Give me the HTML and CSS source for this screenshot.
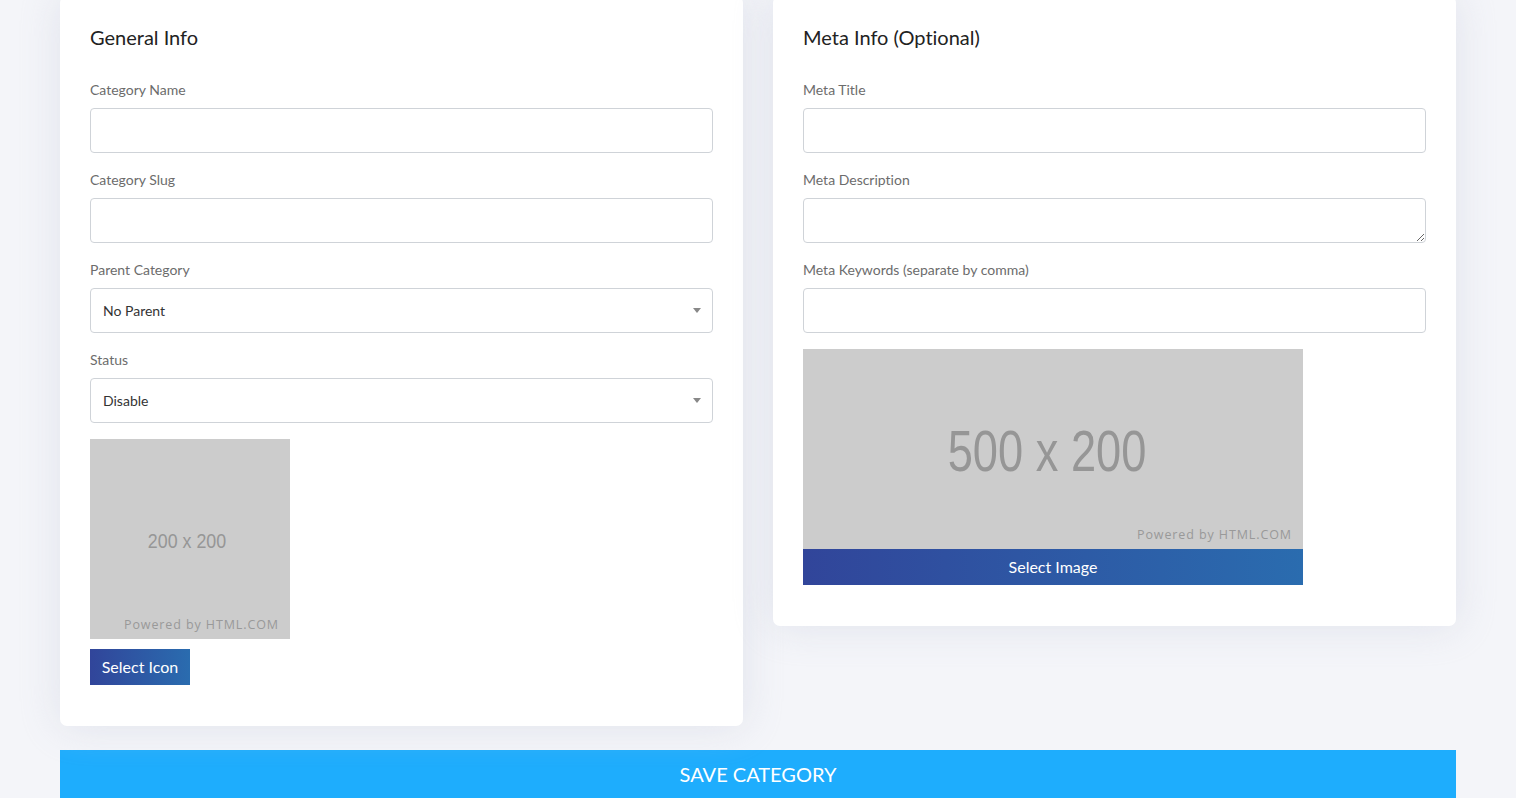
FILE: index.html
```html
<!DOCTYPE html>
<html lang="en">
<head>
<meta charset="utf-8">
<title>Add Category</title>
<link rel="stylesheet" href="styles.css">
</head>
<body>
<div class="page">
  <div class="row">
    <div class="card">
      <h2 class="card-title">General Info</h2>
      <div class="group">
        <label class="label">Category Name</label>
        <input class="control" type="text">
      </div>
      <div class="group">
        <label class="label">Category Slug</label>
        <input class="control" type="text">
      </div>
      <div class="group">
        <label class="label">Parent Category</label>
        <div class="select-wrap">
          <select class="control select"><option>No Parent</option></select>
          <span class="caret"></span>
        </div>
      </div>
      <div class="group">
        <label class="label">Status</label>
        <div class="select-wrap">
          <select class="control select"><option>Disable</option></select>
          <span class="caret"></span>
        </div>
      </div>
      <div class="upload upload-icon">
        <svg class="ph" width="200" height="200" viewBox="0 0 200 200">
          <rect width="200" height="200" fill="#cccccc"/>
          <text transform="translate(97 109) scale(0.85 1)" text-anchor="middle" font-family="Liberation Sans, Arial, sans-serif" font-size="21" fill="#969696">200 x 200</text>
          <text x="189" y="190" text-anchor="end" font-family="Open Sans, sans-serif" font-size="12.5" letter-spacing="0.9" fill="#999999">Powered by HTML.COM</text>
        </svg>
        <button class="btn-grad btn-icon" type="button">Select Icon</button>
      </div>
    </div>
    <div class="card">
      <h2 class="card-title">Meta Info (Optional)</h2>
      <div class="group">
        <label class="label">Meta Title</label>
        <input class="control" type="text">
      </div>
      <div class="group">
        <label class="label">Meta Description</label>
        <textarea class="control textarea"></textarea>
      </div>
      <div class="group">
        <label class="label">Meta Keywords (separate by comma)</label>
        <input class="control" type="text">
      </div>
      <div class="upload upload-image">
        <svg class="ph" width="500" height="200" viewBox="0 0 500 200">
          <rect width="500" height="200" fill="#cccccc"/>
          <text transform="translate(244 122) scale(0.78 1)" text-anchor="middle" font-family="Liberation Sans, Arial, sans-serif" font-size="58" fill="#969696">500 x 200</text>
          <text x="489" y="190" text-anchor="end" font-family="Open Sans, sans-serif" font-size="12.5" letter-spacing="0.9" fill="#999999">Powered by HTML.COM</text>
        </svg>
        <button class="btn-grad btn-image" type="button">Select Image</button>
      </div>
    </div>
  </div>
  <button class="btn-save" type="button">SAVE CATEGORY</button>
</div>
</body>
</html>
```

FILE: styles.css
```css
* { box-sizing: border-box; }
html, body { margin: 0; padding: 0; }
body {
  background: #f4f5f9;
  font-family: "Lato", "Open Sans", sans-serif;
  font-variant-ligatures: no-common-ligatures;
  color: #212529;
  overflow: hidden;
}
.page {
  padding: 0 60px;
  margin-top: -4px;
}
.row {
  display: flex;
  align-items: flex-start;
  gap: 30px;
  margin-bottom: 24px;
}
.card {
  flex: 1 1 0;
  background: #fff;
  border-radius: 7px;
  padding: 29px 30px 30px;
  box-shadow: 0 0 40px rgba(200, 205, 220, 0.45);
}
.card-title {
  margin: 0 0 30px;
  font-size: 20px;
  line-height: 24px;
  font-weight: 400;
  color: #222;
}
.group { margin-bottom: 16px; }
.label {
  display: block;
  font-size: 14px;
  line-height: 21px;
  color: #6c6c6c;
  margin-bottom: 8px;
}
.control {
  display: block;
  width: 100%;
  height: 45px;
  border: 1px solid #cfd3d8;
  border-radius: 4px;
  background: #fff;
  font-family: "Lato", sans-serif;
  font-variant-ligatures: no-common-ligatures;
  font-size: 14px;
  color: #333;
  padding: 0 12px;
  outline: none;
  margin: 0;
}
.textarea {
  resize: vertical;
  padding: 8px 12px;
  min-height: 45px;
}
.select-wrap { position: relative; }
.select {
  -webkit-appearance: none;
  appearance: none;
  cursor: pointer;
}
.caret {
  position: absolute;
  right: 12px;
  top: 20px;
  width: 0;
  height: 0;
  border-left: 4px solid transparent;
  border-right: 4px solid transparent;
  border-top: 5px solid #888;
}
.upload {
  display: flex;
  flex-direction: column;
  align-items: flex-start;
  margin-bottom: 11px;
}
.ph { display: block; }
.btn-grad {
  border: 0;
  color: #fff;
  font-family: "Lato", sans-serif;
  font-size: 16px;
  height: 36px;
  padding: 0 0 2px;
  background: linear-gradient(90deg, #31459a 0%, #2a6caf 100%);
  cursor: pointer;
}
.btn-icon {
  width: 100px;
  margin-top: 10px;
}
.btn-image {
  width: 500px;
}
.btn-save {
  display: block;
  width: 100%;
  height: 50px;
  border: 0;
  padding: 0 0 2px;
  background: #1eadfd;
  color: #fff;
  font-family: "Lato", sans-serif;
  font-size: 20px;
  cursor: pointer;
}
```
